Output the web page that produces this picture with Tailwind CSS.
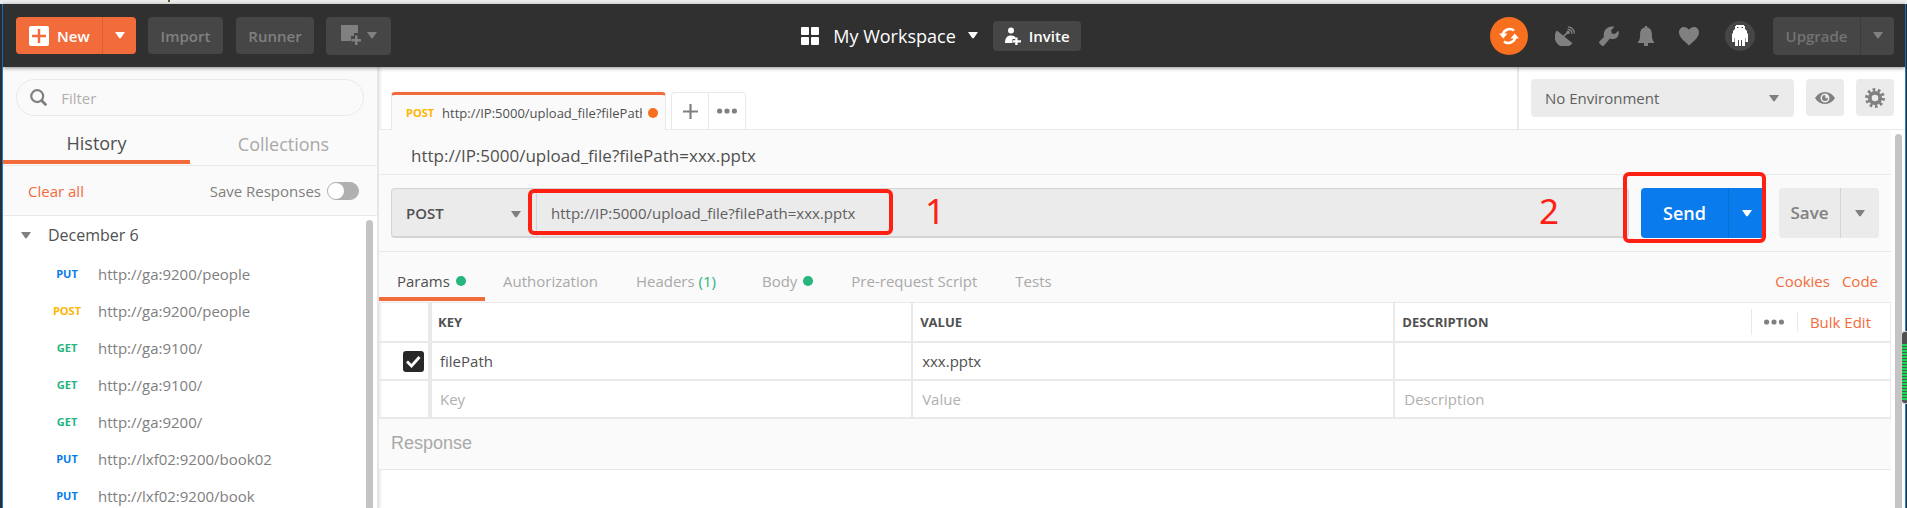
<!DOCTYPE html>
<html lang="en">
<head>
<meta charset="utf-8">
<meta name="viewport" content="width=device-width, initial-scale=1">
<title>My Workspace</title>
<script src="https://cdn.jsdelivr.net/npm/@tailwindcss/browser@4"></script>
</head>
<body class="font-['Open_Sans',sans-serif] text-[15px] leading-5 text-[#505050] bg-[#282f37]">
<svg class="hidden">
  <symbol id="caret" viewBox="0 0 10 7"><path d="M0 0h10L5.700 6.300h-1.400z" fill="currentColor"/></symbol>
  <symbol id="dots" viewBox="0 0 20 6"><g fill="currentColor"><circle cx="2.600" cy="3" r="2.600"/><circle cx="10" cy="3" r="2.600"/><circle cx="17.400" cy="3" r="2.600"/></g></symbol>
</svg>
<div class="relative flex h-screen flex-col overflow-hidden">
  <div class="h-1 shrink-0 bg-[#ededed]"><div class="ml-[168px] h-0.5 w-0.5 bg-[#5a5a30]"></div></div>
  <div class="mr-px ml-0.5 flex min-h-0 grow flex-col border-x border-[#1883d7] bg-white">

    <header class="relative z-10 flex h-[63px] shrink-0 items-center bg-[#303030] pr-[11px] pl-[13px] shadow-[0_1px_4px_rgba(0,0,0,0.45)]">
      <div class="flex flex-1 items-center font-semibold">
        <div class="flex h-[37px] overflow-hidden rounded bg-[#f26b3a] text-white">
          <button class="flex w-[86px] items-center gap-2 pl-[13px]">
            <svg class="size-5" viewBox="0 0 20 20"><rect width="20" height="20" rx="2" fill="#fff"/><path d="M10 3v14M3 10h14" stroke="#f26b3a" stroke-width="2.500"/></svg>New</button>
          <button aria-label="New options" class="flex w-[34px] items-center justify-center border-l border-[#da6034]"><svg class="h-[7px] w-2.5"><use href="#caret"/></svg></button>
        </div>
        <button class="ml-3 h-[37px] w-[75px] rounded bg-[#464646] text-[#808080]">Import</button>
        <button class="ml-[13px] h-[37px] w-[78px] rounded bg-[#464646] text-[#808080]">Runner</button>
        <button aria-label="Open new window" class="ml-3 flex h-[38px] w-[65px] items-center justify-center gap-[5px] rounded bg-[#464646] text-[#808080]">
          <svg class="size-[21px]" viewBox="0 0 21 21" fill="currentColor"><path d="M0 0h17v8h-4v3h-3v5H0z"/><path d="M14 10.500h2.500V14H20v2.500h-3.500V20H14v-3.500h-3.500V14H14z"/></svg>
          <svg class="h-[7px] w-2.5"><use href="#caret"/></svg>
        </button>
      </div>
      <div class="mr-7 flex items-center text-white">
        <svg class="size-[18px]" viewBox="0 0 18 18" fill="currentColor"><rect width="8" height="8" rx="1"/><rect x="10" width="8" height="8" rx="1"/><rect y="10" width="8" height="8" rx="1"/><rect x="10" y="10" width="8" height="8" rx="1"/></svg>
        <button class="ml-3.5 flex items-center gap-3 text-lg leading-5">My Workspace <svg class="h-[7px] w-2.5"><use href="#caret"/></svg></button>
        <button class="ml-[15px] flex h-[30px] w-[88px] items-center gap-2 rounded bg-[#464646] pl-3 font-semibold">
          <svg class="h-[18px] w-4" viewBox="0 0 16 18" fill="currentColor"><circle cx="6" cy="3.500" r="3"/><path d="M0 16c0-5 2-7.500 6-7.500 2.400 0 4 .8 4.500 2V12H7.500v4z"/><path d="M10.200 10.500h2.400v2.700H16v2.400h-3.400V18h-2.400v-2.400H8v-2.400h2.200z"/></svg>Invite</button>
      </div>
      <div class="flex flex-1 items-center justify-end text-[#808080]">
        <button aria-label="Sync" class="flex size-[38px] items-center justify-center rounded-full bg-[#f76f1f] text-white">
          <svg class="size-5" viewBox="0 0 20 20" fill="none" stroke="currentColor" stroke-width="2.600"><path d="M3.800 8.500A7 7 0 0 1 15 4.600M16.200 11.500A7 7 0 0 1 5 15.400"/><path d="M0 7.500h8.500l-4.200 5zM20 12.500h-8.500l4.200-5z" fill="currentColor" stroke="none"/></svg></button>
        <button aria-label="Interceptor" class="ml-[27px]"><svg class="size-5" viewBox="0 0 20 20" fill="currentColor"><path d="M2 4.500 17.500 17.300A10 10 0 0 1 2 4.500z"/><path d="m8 11 5-5" stroke="currentColor" stroke-width="1.600"/><circle cx="13" cy="6.500" r="1.800"/><path d="M12.500 3.600a3.600 3.600 0 0 1 4.300 4.200M12.800.9a6.500 6.500 0 0 1 6.500 6.500" fill="none" stroke="currentColor" stroke-width="1.300"/></svg></button>
        <button aria-label="Settings" class="ml-6"><svg class="size-5" viewBox="0 0 20 20" fill="currentColor"><path d="M15.500.8 12.200 4.300l.6 3.100 3 .6 3.600-3.200c1.200 3.700-.8 7.700-4.600 8.300-1.400.2-2.700 0-3.800-.5l-5.800 6.700c-1 1.100-2 .9-2.900 0L.8 17.800c-1-.9-.9-2 .1-2.900l4-3.900C3.600 4.200 9-1.200 15.500.8z"/></svg></button>
        <button aria-label="Notifications" class="ml-[19px]"><svg class="h-5 w-4" viewBox="0 0 16 20" fill="currentColor"><path d="M6.800 0h2.400v1.500c3.600.7 4.700 3.500 4.700 7.200 0 3.500.5 5.500 2.100 7.300v1H0v-1c1.600-1.800 2.100-3.800 2.100-7.300 0-3.700 1.100-6.500 4.700-7.200zM6 17h4v3H6z"/></svg></button>
        <button aria-label="Favorites" class="ml-[25px]"><svg class="size-5" viewBox="0 0 20 20" fill="currentColor"><path d="M10 19.500C6 15.700 0 11.500 0 6.300 0 1 6.500-1 10 3.800 13.500-1 20 1 20 6.300c0 5.200-6 9.400-10 13.200z"/></svg></button>
        <button aria-label="Account" class="ml-[26px] flex size-[30px] items-center justify-center rounded-full bg-[#464646]"><svg class="h-[22px] w-4" viewBox="0 0 16 22" fill="#fff"><path d="M4 0h8v1h1v3h-1v1H4V4H3V1h1z"/><path d="M3 4h10l2 2v2l1 1v8h-2.500v-4H13v8h-3v-6H9v6H7v-6H6v6H3v-8h-.5v4H0V9l1-1V6z"/><path d="M5 2h1.500v1H5zm4.500 0H11v1H9.500z" fill="#464646"/></svg></button>
        <div class="ml-[18px] flex h-[38px] rounded bg-[#464646] font-semibold text-[#737373]">
          <button class="w-[87px]">Upgrade</button>
          <button aria-label="Upgrade options" class="flex w-[34px] items-center justify-center border-l border-[#3b3b3b] text-[#808080]"><svg class="h-[7px] w-2.5"><use href="#caret"/></svg></button>
        </div>
      </div>
    </header>

    <div class="flex min-h-0 grow">
      <aside class="flex w-[376px] shrink-0 flex-col border-r-2 border-[#e6e6e6] bg-[#fafafa] shadow-[1px_0_3px_rgba(0,0,0,0.12)]">
        <label class="mx-[13px] mt-3 flex h-[38px] items-center gap-3.5 rounded-full border border-[#e9e9e9] pl-[13px]">
          <svg class="size-[19px] text-[#808080]" viewBox="0 0 19 19" fill="none" stroke="currentColor" stroke-width="2.400"><circle cx="8" cy="8" r="6.600"/><path d="m12.600 12.600 5.400 5.400" stroke-width="3"/></svg>
          <input type="text" placeholder="Filter" class="w-full bg-transparent pr-4 outline-none placeholder:text-[#b0b0b0]">
        </label>
        <nav class="mt-[11px] flex h-[39px] shrink-0 border-b border-[#e9e9e9] text-lg">
          <button class="h-[37px] flex-1 border-b-4 border-[#f26b3a] pb-0.5">History</button>
          <button class="h-[37px] flex-1 pb-1 text-[#a9a9a9]">Collections</button>
        </nav>
        <div class="flex h-[50px] shrink-0 items-center border-b border-[#e9e9e9] pr-[18px] pl-[25px]">
          <a href="#" class="grow text-[#f26b3a]">Clear all</a>
          <label for="save-responses" class="text-[#808080]">Save Responses</label>
          <input id="save-responses" type="checkbox" class="ml-1.5 h-[18px] w-8 appearance-none rounded-full border border-[#b0b0b0] bg-[#b0b0b0] before:block before:size-4 before:rounded-full before:bg-white">
        </div>
        <div class="flex min-h-0 grow justify-between overflow-hidden bg-white pr-1">
          <div>
            <button class="flex h-[38px] items-center gap-[17px] pl-[18px] text-base"><svg class="h-[7px] w-2.5 text-[#808080]"><use href="#caret"/></svg>December 6</button>
            <ul class="pt-px text-[#808080]">
              <li class="flex h-[37px] items-center"><b class="ml-[46px] w-9 text-center text-[11px] text-[#097bed]">PUT</b><a href="#" class="ml-[13px]">http://ga:9200/people</a></li>
              <li class="flex h-[37px] items-center"><b class="ml-[46px] w-9 text-center text-[11px] text-[#ffb400]">POST</b><a href="#" class="ml-[13px]">http://ga:9200/people</a></li>
              <li class="flex h-[37px] items-center"><b class="ml-[46px] w-9 text-center text-[11px] text-[#26b47f]">GET</b><a href="#" class="ml-[13px]">http://ga:9100/</a></li>
              <li class="flex h-[37px] items-center"><b class="ml-[46px] w-9 text-center text-[11px] text-[#26b47f]">GET</b><a href="#" class="ml-[13px]">http://ga:9100/</a></li>
              <li class="flex h-[37px] items-center"><b class="ml-[46px] w-9 text-center text-[11px] text-[#26b47f]">GET</b><a href="#" class="ml-[13px]">http://ga:9200/</a></li>
              <li class="flex h-[37px] items-center"><b class="ml-[46px] w-9 text-center text-[11px] text-[#097bed]">PUT</b><a href="#" class="ml-[13px]">http://lxf02:9200/book02</a></li>
              <li class="flex h-[37px] items-center"><b class="ml-[46px] w-9 text-center text-[11px] text-[#097bed]">PUT</b><a href="#" class="ml-[13px]">http://lxf02:9200/book</a></li>
            </ul>
          </div>
          <div class="mt-1 w-[7px] rounded-t bg-[#c4c4c4]"></div>
        </div>
      </aside>

      <main class="flex min-w-0 grow flex-col">
        <div class="flex h-[63px] shrink-0 items-end border-b border-[#e9e9e9] pl-3">
          <div class="-mb-px flex h-[38px] w-[275px] items-center rounded-t border-x border-t-[3px] border-x-[#e9e9e9] border-t-[#f26b3a] bg-[#fafafa] pr-[7px] pl-3.5 text-[13px]">
            <b class="text-[11px] text-[#ffb400]">POST</b>
            <span class="ml-2 grow overflow-hidden whitespace-nowrap">http://IP:5000/upload_file?filePath=xxx.pptx</span>
            <i class="ml-1.5 size-2.5 shrink-0 rounded-full bg-[#f76f1f]"></i>
          </div>
          <div class="ml-[5px] flex h-[37px] grow text-[#808080]">
            <button aria-label="New tab" class="flex w-[37px] items-center justify-center rounded-tl border-t border-l border-[#e9e9e9]"><svg class="size-[15px]" viewBox="0 0 15 15"><path d="M7.500 0v15M0 7.500h15" stroke="currentColor" stroke-width="2.200"/></svg></button>
            <button aria-label="Tab options" class="flex w-[38px] items-center justify-center rounded-tr border border-b-0 border-[#e9e9e9]"><svg class="h-1.5 w-5"><use href="#dots"/></svg></button>
          </div>
          <div class="flex h-full items-start gap-3 border-l-2 border-[#e9e9e9] pt-3 pr-[11px] pl-3 text-[#808080]">
            <div class="relative">
              <select aria-label="Environment" class="h-[38px] w-[263px] appearance-none rounded bg-[#ebebeb] pl-3.5 text-[#606060]"><option>No Environment</option></select>
              <svg class="pointer-events-none absolute top-4 right-[15px] h-[7px] w-2.5"><use href="#caret"/></svg>
            </div>
            <button aria-label="Environment quick look" class="flex h-[37px] w-[38px] items-center justify-center rounded bg-[#ebebeb]"><svg class="h-3 w-5" viewBox="0 0 20 12" fill="currentColor"><path fill-rule="evenodd" d="M0 6c2.500-4 6-6 10-6s7.500 2 10 6c-2.500 4-6 6-10 6S2.500 10 0 6zm10-4.500a4.500 4.500 0 1 0 0 9 4.500 4.500 0 0 0 0-9z"/><path d="M10 3a3 3 0 1 0 3 3l-2.500.3z"/></svg></button>
            <button aria-label="Manage environments" class="flex h-[37px] w-[38px] items-center justify-center rounded bg-[#ebebeb]"><svg class="size-5" viewBox="0 0 20 20" fill="none" stroke="currentColor"><circle cx="10" cy="10" r="5.200" stroke-width="3.800"/><circle cx="10" cy="10" r="8.300" stroke-width="3.300" stroke-dasharray="2.607 2.607"/></svg></button>
          </div>
        </div>

        <div class="flex min-h-0 grow justify-between pr-[3px]">
          <div class="mr-1 flex min-w-0 grow flex-col">
            <h1 class="flex h-[45px] items-center border-b border-[#e9e9e9] bg-[#fafafa] pt-2 pl-8 text-[17px] font-medium">http://IP:5000/upload_file?filePath=xxx.pptx</h1>
            <div class="flex h-[77px] items-center border-b border-[#e9e9e9] bg-[#fafafa] px-3">
              <div class="relative flex h-[50px] grow rounded border border-b-2 border-[#d4d4d4] bg-[#ebebeb]">
                <select aria-label="Method" class="w-[145px] appearance-none border-r border-[#d4d4d4] pl-3.5 font-semibold"><option>POST</option></select>
                <svg class="pointer-events-none absolute top-[22px] left-[119px] h-[7px] w-2.5 text-[#808080]"><use href="#caret"/></svg>
                <input aria-label="Request URL" type="text" value="http://IP:5000/upload_file?filePath=xxx.pptx" class="min-w-0 grow pl-3.5 text-[#606060] outline-none">
                <div class="pointer-events-none absolute top-0 left-[136px] h-[46px] w-[365px] rounded-md border-4 border-[#ff2014]"></div>
                <span class="pointer-events-none absolute top-0.5 left-[533px] font-['Noto_Sans',sans-serif] text-[35px] leading-10 text-[#ff2014]">1</span>
                <span class="pointer-events-none absolute top-0.5 right-[69px] font-['Noto_Sans',sans-serif] text-[35px] leading-10 text-[#ff2014]">2</span>
              </div>
              <div class="relative ml-3 flex h-[50px] rounded bg-[#097bed] text-lg font-semibold text-white">
                <button class="w-[87px]">Send</button>
                <button aria-label="Send options" class="flex w-[37px] items-center justify-center border-l border-[#086ed4]"><svg class="h-[7px] w-2.5"><use href="#caret"/></svg></button>
                <div class="pointer-events-none absolute -top-4 -right-px h-[71px] w-[143px] rounded-md border-4 border-[#ff2014]"></div>
              </div>
              <div class="ml-3.5 flex h-[50px] rounded bg-[#ebebeb] text-[17px] font-semibold text-[#808080]">
                <button class="w-[61px]">Save</button>
                <button aria-label="Save options" class="flex w-[39px] items-center justify-center border-l border-[#d4d4d4]"><svg class="h-[7px] w-2.5"><use href="#caret"/></svg></button>
              </div>
            </div>

            <div class="flex h-[51px] items-end border-b border-[#e9e9e9] bg-[#fafafa] pr-[13px] text-[#a9a9a9]">
              <nav class="flex h-[39px] grow items-start">
                <button class="flex h-[38px] w-[106px] items-center gap-1.5 border-b-4 border-[#f26b3a] pt-0.5 pl-[18px] text-[#505050]">Params <i class="size-2.5 rounded-full bg-[#26b47f]"></i></button>
                <button class="ml-[18px] h-9">Authorization</button>
                <button class="ml-[38px] h-9">Headers <span class="text-[#26b47f]">(1)</span></button>
                <button class="ml-[46px] flex h-9 items-center gap-1.5">Body <i class="size-2.5 rounded-full bg-[#26b47f]"></i></button>
                <button class="ml-[38px] h-9">Pre-request Script</button>
                <button class="ml-[38px] h-9">Tests</button>
              </nav>
              <div class="flex h-[39px] gap-3 pt-2 text-[#f26b3a]"><a href="#">Cookies</a><a href="#">Code</a></div>
            </div>

            <table class="w-full table-fixed border-collapse border-r border-[#e9e9e9] text-left">
              <thead class="text-[13px] text-[#505050]">
                <tr class="h-[39px] border-b-2 border-[#e9e9e9]">
                  <th aria-label="Enabled" class="w-[51px] border-r-4 border-[#e9e9e9]"></th>
                  <th class="w-[31.9%] border-r-2 border-[#e9e9e9] pl-1.5 font-bold">KEY</th>
                  <th class="w-[31.9%] border-r-2 border-[#e9e9e9] pl-[7px] font-bold">VALUE</th>
                  <th class="pl-[7px] font-bold">
                    <div class="flex items-center">
                      <span class="grow">DESCRIPTION</span>
                      <button aria-label="Column options" class="flex h-[26px] w-[46px] items-center justify-center border-l border-[#e9e9e9] text-[#808080]"><svg class="h-1.5 w-5"><use href="#dots"/></svg></button>
                      <button class="mr-[7px] h-5 border-l border-[#e9e9e9] px-3 text-[15px] font-normal text-[#f26b3a]">Bulk Edit</button>
                    </div>
                  </th>
                </tr>
              </thead>
              <tbody>
                <tr class="h-[38px] border-b-2 border-[#e9e9e9]">
                  <td class="border-r-4 border-[#e9e9e9]"><div class="relative ml-6 size-[21px]"><input type="checkbox" checked aria-label="Enable filePath" class="block size-[21px] appearance-none rounded-[3px] bg-[#282828]"><svg class="pointer-events-none absolute inset-0" viewBox="0 0 21 21" fill="none" stroke="#fff" stroke-width="2.800"><path d="m4 10.500 4.500 4.500 8-9"/></svg></div></td>
                  <td class="border-r-2 border-[#e9e9e9] pl-2"><input aria-label="Key" value="filePath" class="w-full outline-none"></td>
                  <td class="border-r-2 border-[#e9e9e9] pl-[9px]"><input aria-label="Value" value="xxx.pptx" class="w-full outline-none"></td>
                  <td class="pl-[9px]"><input aria-label="Description" class="w-full outline-none"></td>
                </tr>
                <tr class="h-[38px] border-b-2 border-[#e9e9e9]">
                  <td class="border-r-4 border-[#e9e9e9]"></td>
                  <td class="border-r-2 border-[#e9e9e9] pl-2"><input aria-label="New key" placeholder="Key" class="w-full outline-none placeholder:text-[#b0b0b0]"></td>
                  <td class="border-r-2 border-[#e9e9e9] pl-[9px]"><input aria-label="New value" placeholder="Value" class="w-full outline-none placeholder:text-[#b0b0b0]"></td>
                  <td class="pl-[9px]"><input aria-label="New description" placeholder="Description" class="w-full outline-none placeholder:text-[#b0b0b0]"></td>
                </tr>
              </tbody>
            </table>
            <h2 class="flex h-[51px] shrink-0 items-center border-b border-[#e9e9e9] bg-[#fafafa] pb-0.5 pl-3 font-['Liberation_Sans',sans-serif] text-lg text-[#a9a9a9]">Response</h2>
          </div>
          <div class="mt-1 w-[7px] shrink-0 rounded-t bg-[#c4c4c4]"></div>
        </div>
      </main>
    </div>
  </div>
  <!-- Desktop level meter docked at the screen edge -->
  <div class="absolute top-[331px] right-0 z-20 h-[73px] w-1.5 rounded-l border border-r-0 border-[#d0d0d0] bg-[#505050] pt-3"><div class="h-[57px] bg-[repeating-linear-gradient(#1fd655_0_2px,#4a5a50_2px_3px)]"></div></div>
</div>
</body>
</html>
